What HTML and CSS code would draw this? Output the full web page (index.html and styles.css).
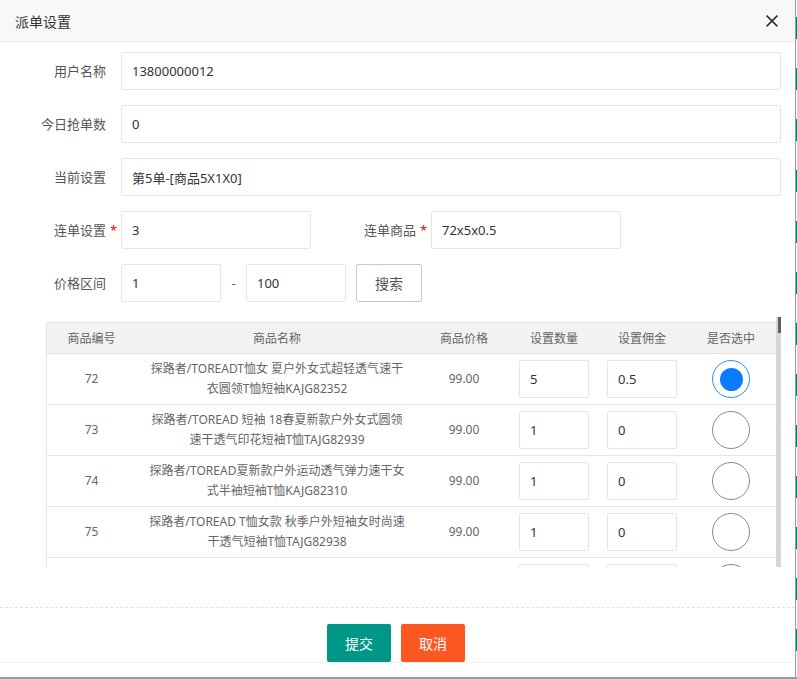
FILE: index.html
```html
<!DOCTYPE html>
<html lang="zh-CN">
<head>
<meta charset="utf-8">
<title>派单设置</title>
<link rel="stylesheet" href="styles.css">
</head>
<body>
<div class="screen">
  <div class="main">
    <div class="dialog">
      <div class="dlg-head">
        <span class="dlg-title">派单设置</span>
        <svg class="dlg-close" width="12" height="12" viewBox="0 0 12 12"><path d="M0.6 0.6 L11.4 11.4 M11.4 0.6 L0.6 11.4" stroke="#2f2f3a" stroke-width="1.6" fill="none"/></svg>
      </div>
      <div class="dlg-body">
        <div class="form">
          <div class="form-item">
            <label class="form-label">用户名称</label>
            <input class="input grow" value="13800000012">
          </div>
          <div class="form-item">
            <label class="form-label">今日抢单数</label>
            <input class="input grow" value="0">
          </div>
          <div class="form-item">
            <label class="form-label">当前设置</label>
            <input class="input grow" value="第5单-[商品5X1X0]">
          </div>
          <div class="form-item gap10">
            <div class="inline">
              <label class="form-label">连单设置<span class="req">*</span></label>
              <input class="input w190" value="3">
            </div>
            <div class="inline">
              <label class="form-label">连单商品<span class="req">*</span></label>
              <input class="input w190" value="72x5x0.5">
            </div>
          </div>
          <div class="form-item">
            <label class="form-label">价格区间</label>
            <input class="input w100" value="1">
            <span class="mid">-</span>
            <input class="input w100" value="100">
            <button type="button" class="btn btn-plain">搜索</button>
          </div>
          <div class="table-box">
            <div class="table-view">
              <table class="table">
                <colgroup>
                  <col style="width:90px"><col style="width:282px"><col style="width:92px"><col style="width:88px"><col style="width:88px"><col style="width:90px">
                </colgroup>
                <thead>
                  <tr><th>商品编号</th><th>商品名称</th><th>商品价格</th><th>设置数量</th><th>设置佣金</th><th>是否选中</th></tr>
                </thead>
                <tbody>
                  <tr>
                    <td>72</td>
                    <td class="name">探路者/TOREADT恤女 夏户外女式超轻透气速干<br>衣圆领T恤短袖KAJG82352</td>
                    <td>99.00</td>
                    <td><input class="input cell-input" value="5"></td>
                    <td><input class="input cell-input" value="0.5"></td>
                    <td><span class="radio on"><span class="dot"></span></span></td>
                  </tr>
                  <tr>
                    <td>73</td>
                    <td class="name">探路者/TOREAD 短袖 18春夏新款户外女式圆领<br>速干透气印花短袖T恤TAJG82939</td>
                    <td>99.00</td>
                    <td><input class="input cell-input" value="1"></td>
                    <td><input class="input cell-input" value="0"></td>
                    <td><span class="radio"></span></td>
                  </tr>
                  <tr>
                    <td>74</td>
                    <td class="name">探路者/TOREAD夏新款户外运动透气弹力速干女<br>式半袖短袖T恤KAJG82310</td>
                    <td>99.00</td>
                    <td><input class="input cell-input" value="1"></td>
                    <td><input class="input cell-input" value="0"></td>
                    <td><span class="radio"></span></td>
                  </tr>
                  <tr>
                    <td>75</td>
                    <td class="name">探路者/TOREAD T恤女款 秋季户外短袖女时尚速<br>干透气短袖T恤TAJG82938</td>
                    <td>99.00</td>
                    <td><input class="input cell-input" value="1"></td>
                    <td><input class="input cell-input" value="0"></td>
                    <td><span class="radio"></span></td>
                  </tr>
                  <tr>
                    <td></td>
                    <td class="name"></td>
                    <td></td>
                    <td><input class="input cell-input" value=""></td>
                    <td><input class="input cell-input" value=""></td>
                    <td><span class="radio"></span></td>
                  </tr>
                </tbody>
              </table>
            </div>
            <div class="scrollbar"><div class="thumb"></div></div>
          </div>
        </div>
      </div>
      <div class="dlg-foot">
        <button type="button" class="btn btn-ok">提交</button>
        <button type="button" class="btn btn-cancel">取消</button>
      </div>
    </div>
    <div class="edge"></div>
  </div>
  <div class="bottom-bar"></div>
</div>
</body>
</html>
```

FILE: styles.css
```css
* { box-sizing: border-box; }
html, body { margin: 0; padding: 0; }
body {
  background: #fff;
  font-family: "Noto Sans", "Noto Sans CJK SC", sans-serif;
  color: #333;
}
.screen {
  width: 797px;
  height: 679px;
  display: flex;
  flex-direction: column;
  overflow: hidden;
}
.main { display: flex; height: 677px; }
.dialog {
  width: 796px;
  height: 677px;
  border-right: 1px solid #9a9a9a;
  display: flex;
  flex-direction: column;
  background: #fff;
}
.edge {
  width: 1px;
  background-color: #fff;
  background-image: linear-gradient(#0b7a66 0, #0b7a66 22px, transparent 22px);
  background-size: 1px 51px;
  background-repeat: repeat-y;
  background-position: 0 17px;
}
.bottom-bar { height: 2px; background: #9a9a9a; }

.dlg-head {
  height: 42px;
  flex-shrink: 0;
  background: #f8f8f8;
  border-bottom: 1px solid #eee;
  display: flex;
  align-items: center;
  justify-content: space-between;
  padding: 0 17px 0 15px;
}
.dlg-title { font-size: 14px; color: #333; }
.dlg-close { display: block; }

.dlg-body { padding: 10px 14px 0 11px; }
.form { display: flex; flex-direction: column; gap: 15px; }
.form-item { display: flex; align-items: center; }
.gap10 { gap: 10px; }
.inline { display: flex; align-items: center; }
.form-label {
  width: 110px;
  flex-shrink: 0;
  padding-right: 15px;
  text-align: right;
  font-size: 13px;
  line-height: 38px;
  color: #555;
}
.req {
  display: inline-block;
  width: 15px;
  margin-right: -15px;
  padding-left: 4px;
  text-align: left;
  color: #f00;
}
.input {
  height: 38px;
  border: 1px solid #e6e6e6;
  border-radius: 2px;
  padding: 0 10px;
  font-family: inherit;
  font-size: 13px;
  color: #333;
  background: #fff;
  outline: none;
}
.grow { flex: 1; min-width: 0; }
.w190 { width: 190px; }
.w100 { width: 100px; }
.mid {
  width: 5px;
  margin: 0 10px;
  font-size: 13px;
  color: #555;
  text-align: center;
}
.btn {
  height: 38px;
  padding: 0 18px;
  border-radius: 2px;
  font-family: inherit;
  font-size: 14px;
  cursor: pointer;
}
.btn-plain {
  margin-left: 10px;
  border: 1px solid #c9c9c9;
  background: #fff;
  color: #555;
}
.btn-ok { border: none; background: #009688; color: #fff; }
.btn-cancel { border: none; background: #ff5722; color: #fff; }

.table-box {
  margin-left: 35px;
  height: 250px;
  display: flex;
}
.table-view {
  flex: 1;
  overflow: hidden;
  padding-top: 5px;
}
.scrollbar {
  width: 5px;
  background: #d6d6d6;
  display: flex;
  justify-content: flex-end;
}
.thumb { width: 3px; height: 16px; background: #5f5f5f; }

.table {
  width: 730px;
  table-layout: fixed;
  border-collapse: separate;
  border-spacing: 0;
  font-size: 12px;
  color: #666;
}
.table th {
  height: 32px;
  padding: 0;
  background: #f2f2f2;
  border-top: 1px solid #e6e6e6;
  border-bottom: 1px solid #e6e6e6;
  font-weight: normal;
  text-align: center;
}
.table td {
  padding: 5px 0;
  height: 51px;
  border-bottom: 1px solid #e6e6e6;
  text-align: center;
  line-height: 20px;
}
.table th:first-child, .table td:first-child { border-left: 1px solid #e6e6e6; }
.table td.name { white-space: nowrap; }
.cell-input { width: 70px; display: block; margin: 0 auto; }

.radio {
  display: inline-flex;
  align-items: center;
  justify-content: center;
  width: 38px;
  height: 38px;
  border: 1px solid #8a8a8a;
  border-radius: 50%;
  vertical-align: middle;
}
.radio.on { border-color: #2a8bff; }
.dot { width: 23px; height: 23px; border-radius: 50%; background: #0a7bff; }

.dlg-foot {
  margin-top: 40px;
  border-top: 1px dashed #e2e2e2;
  border-bottom: 1px solid #f0f0f0;
  padding: 16px 3px 0 0;
  display: flex;
  justify-content: center;
  gap: 10px;
}
```
